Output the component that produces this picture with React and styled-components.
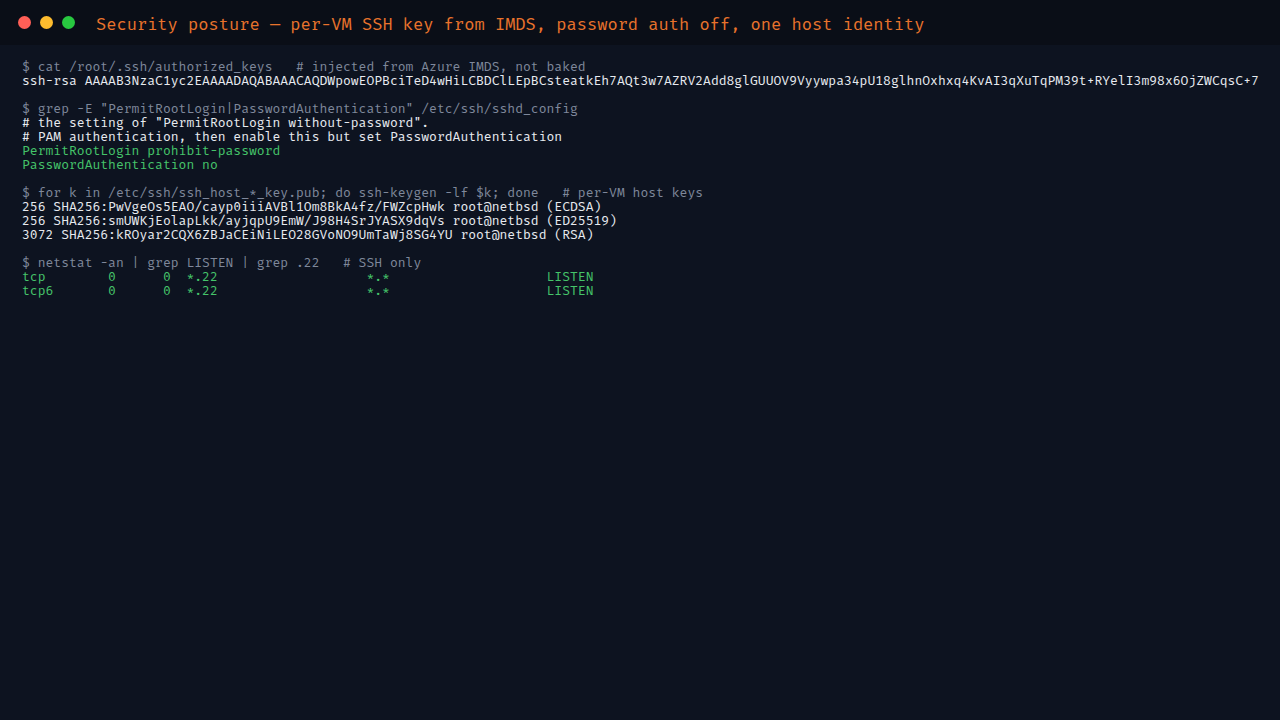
import styled, { createGlobalStyle } from "styled-components"

const Global = createGlobalStyle`
  html, body {
    margin: 0;
    padding: 0;
    background: #0d1320;
  }
`

const Window = styled.div`
  width: 1280px;
  height: 720px;
  background: #0d1320;
  display: flex;
  flex-direction: column;
  overflow: hidden;
`

const TitleBar = styled.div`
  height: 45px;
  background: #0a0e17;
  display: flex;
  align-items: center;
  padding-left: 18px;
  box-sizing: border-box;
`

const Dots = styled.div`
  display: flex;
  gap: 9px;
  margin-right: 21px;
`

const Dot = styled.span`
  width: 13px;
  height: 13px;
  border-radius: 50%;
  background: ${p => p.color};
`

const Title = styled.div`
  font-family: "Fira Mono", "DejaVu Sans Mono", monospace;
  font-size: 17.06px;
  color: #e8732c;
  padding-top: 3px;
`

const Body = styled.div`
  padding: 15px 22px;
  display: flex;
  flex-direction: column;
  gap: 14px;
`

const Block = styled.div`
  display: flex;
  flex-direction: column;
`

const Line = styled.div`
  font-family: "Fira Mono", "DejaVu Sans Mono", monospace;
  font-size: 13.06px;
  line-height: 14px;
  white-space: pre;
  color: ${p => (p.kind === "cmd" ? "#7f889b" : p.kind === "ok" ? "#45c46a" : "#e8ebf0")};
`

const blocks = [
  [
    ["cmd", "$ cat /root/.ssh/authorized_keys   # injected from Azure IMDS, not baked"],
    ["out", "ssh-rsa AAAAB3NzaC1yc2EAAAADAQABAAACAQDWpowEOPBciTeD4wHiLCBDClLEpBCsteatkEh7AQt3w7AZRV2Add8glGUUOV9Vyywpa34pU18glhnOxhxq4KvAI3qXuTqPM39t+RYelI3m98x6OjZWCqsC+7"],
  ],
  [
    ["cmd", "$ grep -E \"PermitRootLogin|PasswordAuthentication\" /etc/ssh/sshd_config"],
    ["out", "# the setting of \"PermitRootLogin without-password\"."],
    ["out", "# PAM authentication, then enable this but set PasswordAuthentication"],
    ["ok", "PermitRootLogin prohibit-password"],
    ["ok", "PasswordAuthentication no"],
  ],
  [
    ["cmd", "$ for k in /etc/ssh/ssh_host_*_key.pub; do ssh-keygen -lf $k; done   # per-VM host keys"],
    ["out", "256 SHA256:PwVgeOs5EAO/cayp0iiiAVBl1Om8BkA4fz/FWZcpHwk root@netbsd (ECDSA)"],
    ["out", "256 SHA256:smUWKjEolapLkk/ayjqpU9EmW/J98H4SrJYASX9dqVs root@netbsd (ED25519)"],
    ["out", "3072 SHA256:kROyar2CQX6ZBJaCEiNiLEO28GVoNO9UmTaWj8SG4YU root@netbsd (RSA)"],
  ],
  [
    ["cmd", "$ netstat -an | grep LISTEN | grep .22   # SSH only"],
    ["ok", "tcp        0      0  *.22                   *.*                    LISTEN"],
    ["ok", "tcp6       0      0  *.22                   *.*                    LISTEN"],
  ],
]

export default function App() {
  return (
    <Window>
      <Global />
      <TitleBar>
        <Dots>
          <Dot color="#ff5f57" />
          <Dot color="#febc2e" />
          <Dot color="#28c840" />
        </Dots>
        <Title>Security posture — per-VM SSH key from IMDS, password auth off, one host identity</Title>
      </TitleBar>
      <Body>
        {blocks.map((b, i) => (
          <Block key={i}>
            {b.map(([kind, text], j) => (
              <Line key={j} kind={kind}>{text}</Line>
            ))}
          </Block>
        ))}
      </Body>
    </Window>
  )
}
